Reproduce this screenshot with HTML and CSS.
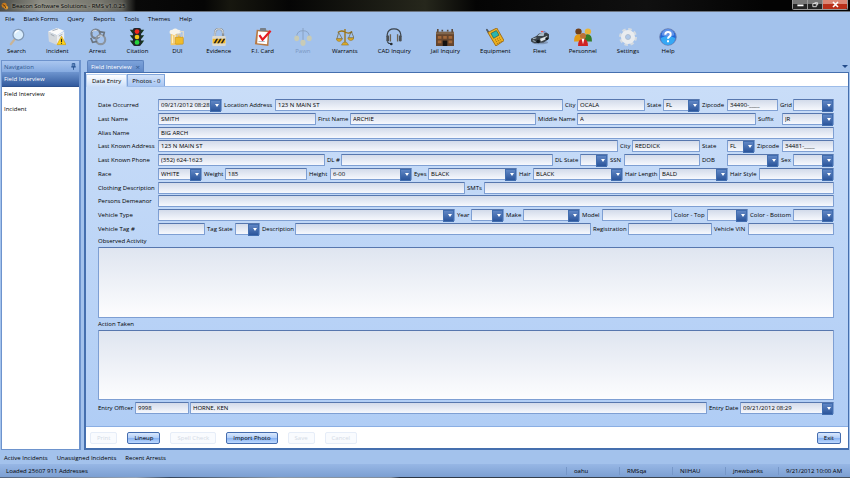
FILE: index.html
```html
<!DOCTYPE html>
<html lang="en">
<head>
<meta charset="utf-8">
<title>Beacon Software Solutions - RMS v1.0.25</title>
<link rel="stylesheet" href="styles.css">
</head>
<body>
<div class="app">
  <header class="titlebar">
    <svg class="app-icon" viewBox="0 0 10 10"><circle cx="4" cy="4" r="3.200" fill="#c77a1c"/><circle cx="6.500" cy="7" r="2.400" fill="#e09a30"/><path d="M2 3l3 2 1 3" stroke="#4a2808" fill="none"/></svg>
    <h1>Beacon Software Solutions - RMS v1.0.25</h1>
    <div class="window-buttons">
      <button aria-label="Minimize"><svg viewBox="0 0 16 9"><path d="M5 5.500h7" stroke="#fff" stroke-width="2"/></svg></button>
      <button aria-label="Restore"><svg viewBox="0 0 16 9"><path d="M7.500 2.500h3.500v3M5.500 3.500h4v3.500h-4z" stroke="#eee" fill="none"/></svg></button>
      <button class="close" aria-label="Close"><svg viewBox="0 0 24 9"><path d="M10 2l5 5M15 2l-5 5" stroke="#fff" stroke-width="1.600"/></svg></button>
    </div>
  </header>

  <nav class="menu">
    <button>File</button><button>Blank Forms</button><button>Query</button><button>Reports</button><button>Tools</button><button>Themes</button><button>Help</button>
  </nav>

  <div class="toolbar">
    <button><svg viewBox="0 0 20 20"><path d="M8 12l-5 6" stroke="#c8b498" stroke-width="2.400" stroke-linecap="round"/><circle cx="11.500" cy="7.500" r="6" fill="#d8ecfc" stroke="#8098b4" stroke-width="1.400"/><path d="M8 6q1-3 4-3" stroke="#fff" stroke-width="1.400" fill="none"/></svg>Search</button>
    <button><svg viewBox="0 0 20 20"><path d="M0 4l10-4 8 3-8 5z" fill="#fafafa"/><path d="M0 4l10 4v11l-9-4z" fill="#d4d8dc"/><path d="M10 8l8-4v10l-8 5z" fill="#eceef0"/><path d="M3 7l4 2M12 9l4-2M5 3l6-2" stroke="#9aa4b0"/><path d="M15 9l5 9.500h-10z" fill="#ffd318" stroke="#c99200" stroke-width=".6"/><path d="M15 12v3.500M15 16.400v1.200" stroke="#222" stroke-width="1.300"/></svg>Incident</button>
    <button><svg viewBox="0 0 20 20" fill="none"><circle cx="7.500" cy="6.500" r="4.800" stroke="#77818d" stroke-width="2.400"/><circle cx="13" cy="13" r="5" stroke="#8b949f" stroke-width="2.400"/><path d="M3.500 4q2-2 5-1.300M10 10q2-2 5-1" stroke="#e5e9ee"/><path d="M11 4l6 1-1 4M2 11l2 5 5-1" stroke="#69737e" stroke-width="1.800"/></svg>Arrest</button>
    <button><svg viewBox="0 0 20 20"><path d="M2 2h16l-3 4h-10zM2 8h16l-3 4h-10zM2 14h16l-3 4h-10z" fill="#17351e"/><rect x="5.500" y="0" width="9" height="20" rx="2" fill="#20262a"/><circle cx="10" cy="4" r="2.600" fill="#f3261c"/><circle cx="10" cy="10" r="2.600" fill="#f2c814"/><circle cx="10" cy="16" r="2.600" fill="#25d33c"/></svg>Citation</button>
    <button><svg viewBox="0 0 20 20"><path d="M3 6h10v13h-10z" fill="#f2c76a"/><path d="M5 8v9M8 8v9" stroke="#fff0c0" stroke-width="1.600"/><path d="M2 6q-1-4 3-4 3-3 6 0 4 0 3 4l-2 1-2-1-3 2z" fill="#f7f4ea"/><path d="M13 4h4v7h-4" fill="none" stroke="#ded9cb" stroke-width="1.600"/><rect x="8" y="10" width="9" height="8" rx="1" fill="#f0bc2c" stroke="#b98318" stroke-width=".6"/><path d="M10 10v-2q2.500-3 5 0v2" fill="none" stroke="#c4c8ca" stroke-width="1.400"/></svg>DUI</button>
    <button><svg viewBox="0 0 20 20"><path d="M5.500 12v-6q0-5 4.500-5t4.500 5v6" fill="none" stroke="#8b9298" stroke-width="2.400"/><path d="M5.500 11v-5q0-5 4.500-5t4.500 5" fill="none" stroke="#eceff1"/><rect x="2.500" y="9" width="15" height="11" rx="1" fill="#dcdad0"/><path d="M3 12h14v5h-14z" fill="#f2b723"/><path d="M4 17l3-5h2l-3 5zM8 17l3-5h2l-3 5zM12 17l3-5h2l-3 5z" fill="#292622"/></svg>Evidence</button>
    <button><svg viewBox="0 0 20 20"><path d="M3 2l14 1-1 17-15-2z" fill="#b87840"/><path d="M4.500 3.500l11 1-1 13.500-11-1z" fill="#fff"/><path d="M7 0h6l1 3.500h-8z" fill="#777f88"/><path d="M6 8l3.500 5 9-10" stroke="#e51c23" stroke-width="2.400" fill="none"/><path d="M5 15h7" stroke="#aab3bf"/></svg>F.I. Card</button>
    <button disabled><svg viewBox="0 0 20 20"><path d="M10 0v14M3 10q0-7 7-7t7 7" fill="none" stroke="#7b91ad"/><ellipse cx="3" cy="11.500" rx="2.700" ry="3.200" fill="#d8cfa0"/><ellipse cx="17" cy="11.500" rx="2.700" ry="3.200" fill="#d8cfa0"/><ellipse cx="10" cy="16.500" rx="2.900" ry="3.500" fill="#d8cfa0"/></svg>Pawn</button>
    <button><svg viewBox="0 0 20 20"><path d="M10 1v15M2 5q4-3 8-.5 4 2.500 8-.5" fill="none" stroke="#9d7415" stroke-width="1.500"/><path d="M3 5l-2 7h6zM17 4l-3 7h6z" fill="none" stroke="#6f653c" stroke-width=".8"/><path d="M0 12h7q-1 3-3.500 3t-3.500-3zM13 11h7q-1 3-3.500 3t-3.500-3zM6 19l2-3h4l2 3z" fill="#d9a928" stroke="#8a6817" stroke-width=".5"/></svg>Warrants</button>
    <button><svg viewBox="0 0 20 20" fill="none"><path d="M2.500 10v-3q1-6 7.500-6t7.500 6v3" stroke="#3a424a" stroke-width="1.300"/><rect x="1.500" y="8" width="3" height="7" rx="1.500" fill="#4b5055"/><rect x="15.500" y="8" width="3" height="7" rx="1.500" fill="#4b5055"/><path d="M6 7v8M14 7v8" stroke="#6b6254" stroke-width="1.500"/><path d="M2.500 15q1 2.500 4 2.500" stroke="#333b42" stroke-width="1.200"/><circle cx="7" cy="17.800" r="1.500" fill="#252b30"/></svg>CAD Inquiry</button>
    <button><svg viewBox="0 0 20 20"><path d="M0 5h20v15h-20z" fill="#65452d"/><path d="M0 4h20v3h-20z" fill="#80664e"/><path d="M2 1v4M18 1v4M7 2v2M13 2v2" stroke="#59483b" stroke-width="1.800"/><path d="M2 9h4v3h-4zM8 9h4v3h-4zM14 9h4v3h-4zM2 14h4v3h-4zM14 14h4v3h-4z" fill="#a3683a"/><path d="M7.500 14h5v6h-5z" fill="#151211"/></svg>Jail Inquiry</button>
    <button><svg viewBox="0 0 20 20"><path d="M3 5l-2-3" stroke="#4f5963" stroke-width="2" stroke-linecap="round"/><path d="M2 5l10-5 8 14-9 6z" fill="#efb31f" stroke="#996815" stroke-linejoin="round"/><path d="M5.500 6l6-3.100 3 5-6 3.500z" fill="#29b6ae" stroke="#24524c" stroke-width=".7"/><path d="M10 13.500l6-3M11 15.500l6-3M12 17.500l6-3" stroke="#8d5a16" stroke-dasharray="1.200"/></svg>Equipment</button>
    <button><svg viewBox="0 0 20 20"><ellipse cx="10" cy="16" rx="9" ry="2" fill="#8097b8"/><path d="M0 12l6-3 3-3 8-1 3 2v5l-6 4-10 1-4-2z" fill="#3a4249"/><path d="M7 9l3-3 5-1-1 4z" fill="#a9bbc9"/><path d="M10 12l8-3v3l-7 3z" fill="#dfe5e9"/><path d="M11 4h3" stroke="#e5564c" stroke-width="1.500"/><path d="M14 4h2" stroke="#6a84d6" stroke-width="1.500"/><circle cx="8" cy="15" r="2" fill="#11171c"/><circle cx="17.500" cy="12" r="1.600" fill="#11171c"/><path d="M2 12l4-1M2 14l3 1" stroke="#b9c8d2"/></svg>Fleet</button>
    <button><svg viewBox="0 0 20 20"><circle cx="5" cy="4" r="3.500" fill="#6f401b"/><path d="M0 15q0-8 5-8t5 8z" fill="#e49b16"/><circle cx="15.500" cy="4" r="3.500" fill="#e8b53a"/><path d="M10 15q0-8 5-8t5 8z" fill="#347c28"/><circle cx="10" cy="9" r="3.400" fill="#bd7134"/><path d="M4.500 20q0-8 5.500-8t5.500 8z" fill="#cf2323"/><path d="M8.500 12h3l-1.500 6z" fill="#fff"/></svg>Personnel</button>
    <button><svg viewBox="0 0 20 20"><circle cx="10" cy="10" r="8" fill="none" stroke="#d3dae1" stroke-width="4" stroke-dasharray="3.600 2.683"/><circle cx="10" cy="10" r="5.300" fill="none" stroke="#e9ecef" stroke-width="5"/><circle cx="10" cy="10" r="2.800" fill="#b0c9e9" stroke="#aeb9c5" stroke-width=".7"/></svg>Settings</button>
    <button><svg viewBox="0 0 20 20"><circle cx="10" cy="10" r="9.200" fill="#2166d8" stroke="#7182b0"/><path d="M2 11a8 8 0 0 0 16 0q-8-4-16 0z" fill="#35a8f4"/><path d="M3 8a7 7 0 0 1 14 0q-7 3-14 0z" fill="#6394e8"/><path d="M7 7.500q0-3 3-3t3 2.600q0 1.500-1.500 2.500t-1.500 2.400M10 13.500v2.300" stroke="#fff" stroke-width="2.200" fill="none"/></svg>Help</button>
  </div>

  <div class="workspace">
    <aside class="navigation">
      <h2>Navigation <svg viewBox="0 0 6 8"><path d="M1.500 .5h3v4h-3zM0 4.500h6M3 4.500v3.500" stroke="#24508f" fill="none"/><path d="M3.500 .5v4" stroke="#24508f"/></svg></h2>
      <a class="current" href="#interview-1">Field Interview</a>
      <a href="#interview-2">Field Interview</a>
      <a href="#incident">Incident</a>
    </aside>

    <main class="document">
      <div class="document-tabs">
        <div class="document-tab">Field Interview <button aria-label="Close tab">×</button></div>
        <button class="tab-list" aria-label="Open documents"></button>
      </div>
      <div class="frame">
        <div class="page-tabs" role="tablist">
          <button class="active" role="tab" aria-selected="true">Data Entry</button>
          <button role="tab" aria-selected="false">Photos - 0</button>
        </div>

        <form class="form">
          <div class="rows">
            <div class="row r-date">
              <label for="occurred">Date Occurred</label><span class="combo"><input id="occurred" value="09/21/2012 08:28"><button type="button" aria-label="Pick date"></button></span>
              <label for="location">Location Address</label><input id="location" value="123 N MAIN ST">
              <label for="city">City</label><input id="city" value="OCALA">
              <label for="state">State</label><span class="combo"><select id="state"><option>FL</option></select></span>
              <label for="zip">Zipcode</label><input id="zip" value="34490-____">
              <label for="grid">Grid</label><span class="combo"><select id="grid"><option></option></select></span>
            </div>
            <div class="row r-name">
              <label for="last">Last Name</label><input id="last" value="SMITH">
              <label for="first">First Name</label><input id="first" value="ARCHIE">
              <label for="middle">Middle Name</label><input id="middle" value="A">
              <label for="suffix">Suffix</label><span class="combo"><select id="suffix"><option>JR</option></select></span>
            </div>
            <div class="row r-full">
              <label for="alias">Alias Name</label><input id="alias" value="BIG ARCH">
            </div>
            <div class="row r-address">
              <label for="address">Last Known Address</label><input id="address" value="123 N MAIN ST">
              <label for="city2">City</label><input id="city2" value="REDDICK">
              <label for="state2">State</label><span class="combo"><select id="state2"><option>FL</option></select></span>
              <label for="zip2">Zipcode</label><input id="zip2" value="34481-____">
            </div>
            <div class="row r-phone">
              <label for="phone">Last Known Phone</label><input id="phone" value="(352) 624-1623">
              <label for="dl">DL #</label><input id="dl">
              <label for="dlstate">DL State</label><span class="combo"><select id="dlstate"><option></option></select></span>
              <label for="ssn">SSN</label><input id="ssn">
              <label for="dob">DOB</label><span class="combo"><input id="dob"><button type="button" aria-label="Pick date of birth"></button></span>
              <label for="sex">Sex</label><span class="combo"><select id="sex"><option></option></select></span>
            </div>
            <div class="row r-looks">
              <label for="race">Race</label><span class="combo"><select id="race"><option>WHITE</option></select></span>
              <label for="weight">Weight</label><input id="weight" value="185">
              <label for="height">Height</label><span class="combo"><select id="height"><option>6-00</option></select></span>
              <label for="eyes">Eyes</label><span class="combo"><select id="eyes"><option>BLACK</option></select></span>
              <label for="hair">Hair</label><span class="combo"><select id="hair"><option>BLACK</option></select></span>
              <label for="hairlen">Hair Length</label><span class="combo"><select id="hairlen"><option>BALD</option></select></span>
              <label for="hairstyle">Hair Style</label><span class="combo"><select id="hairstyle"><option></option></select></span>
            </div>
            <div class="row r-clothing">
              <label for="clothing">Clothing Description</label><input id="clothing">
              <label for="smts">SMTs</label><input id="smts">
            </div>
            <div class="row r-full">
              <label for="demeanor">Persons Demeanor</label><input id="demeanor">
            </div>
            <div class="row r-vehicle">
              <label for="vtype">Vehicle Type</label><span class="combo"><select id="vtype"><option></option></select></span>
              <label for="year">Year</label><span class="combo"><select id="year"><option></option></select></span>
              <label for="make">Make</label><span class="combo"><select id="make"><option></option></select></span>
              <label for="model">Model</label><input id="model">
              <label for="ctop">Color - Top</label><span class="combo"><select id="ctop"><option></option></select></span>
              <label for="cbottom">Color - Bottom</label><span class="combo"><select id="cbottom"><option></option></select></span>
            </div>
            <div class="row r-tag">
              <label for="tag">Vehicle Tag #</label><input id="tag">
              <label for="tagstate">Tag State</label><span class="combo"><select id="tagstate"><option></option></select></span>
              <label for="desc">Description</label><input id="desc">
              <label for="reg">Registration</label><input id="reg">
              <label for="vin">Vehicle VIN</label><input id="vin">
            </div>
          </div>
          <label class="area-label" for="observed">Observed Activity</label>
          <textarea id="observed"></textarea>
          <label class="area-label" for="action">Action Taken</label>
          <textarea id="action"></textarea>
          <div class="row r-officer">
            <label for="officer">Entry Officer</label><input id="officer" value="9998">
            <input aria-label="Officer name" value="HORNE, KEN">
            <label for="entrydate">Entry Date</label><span class="combo"><input id="entrydate" value="09/21/2012 08:29"><button type="button" aria-label="Pick entry date"></button></span>
          </div>
        </form>

        <div class="actions">
          <button disabled>Print</button>
          <button>Lineup</button>
          <button disabled>Spell Check</button>
          <button>Import Photo</button>
          <button disabled>Save</button>
          <button disabled>Cancel</button>
          <button class="exit">Exit</button>
        </div>
      </div>
    </main>
  </div>

  <nav class="panels"><a href="#active">Active Incidents</a><a href="#unassigned">Unassigned Incidents</a><a href="#recent">Recent Arrests</a></nav>
  <footer class="status">
    <span class="message">Loaded 25607 911 Addresses</span>
    <span>oahu</span><span>RMSqa</span><span>NIIHAU</span><span>jnewbanks</span><span class="clock">9/21/2012 10:00 AM</span>
  </footer>
  <div class="desktop-edge"></div>
</div>
</body>
</html>
```
FILE: styles.css
```css
* { box-sizing: border-box; }

body, h1, h2 { margin: 0; }

body, button, input, select, textarea {
  font: 6px/8px "Open Sans", "Noto Sans", sans-serif;
  color: #000;
}

button {
  padding: 0;
  border: 0;
  background: none;
}

a { color: inherit; text-decoration: none; }

.app {
  display: flex;
  flex-direction: column;
  height: 100vh;
  background: #a3c2ec;
  overflow: hidden;
}

/* Title bar */
.titlebar {
  display: flex;
  align-items: center;
  gap: 3px;
  height: 12px;
  padding-left: 1px;
  background: linear-gradient(90deg, #4c4d48 0, #8b8b82 40px, #77776e 100px, #5c5c55 122px, #090909 136px, #050505 24%, #17170f 27%, #050505 34%, #26271c 50%, #040404 56%, #101010 76%, #030303 90%);
  border-bottom: 1px solid #6c7480;
}

.app-icon { width: 8px; height: 8px; }

h1 {
  flex: 1;
  font-size: 6px;
  font-weight: 400;
  color: #000;
  text-shadow: 0 0 3px #c9c8bc;
}

.window-buttons {
  display: flex;
  align-self: flex-start;
  margin-right: 2px;
  border: 1px solid #999;
  border-top: 0;
  border-radius: 0 0 2px 2px;
  overflow: hidden;
}

.window-buttons button {
  width: 15px;
  height: 9px;
  background: linear-gradient(#777 50%, #252525 50%);
  border-right: 1px solid #999;
}

.window-buttons svg { display: block; width: 100%; height: 9px; }

.window-buttons .close {
  width: 24px;
  background: linear-gradient(#dc8775 50%, #b9301a 50%);
  border: 0;
}

/* Menu and toolbar */
.menu {
  display: flex;
  gap: 9px;
  padding: 3px 0 3px 5px;
}

.toolbar {
  display: flex;
  height: 34px;
  margin-left: -3px;
}

.toolbar button {
  display: flex;
  flex-direction: column;
  align-items: center;
  gap: 1px;
  min-width: 36px;
  padding: 2px 10px 0;
  white-space: nowrap;
}

.toolbar svg { width: 18px; height: 18px; }

.toolbar button:disabled { color: #7a97c2; }
.toolbar button:disabled svg { opacity: 0.7; }

/* Workspace */
.workspace {
  display: flex;
  flex: 1;
  gap: 3px;
  min-height: 0;
  padding: 0 1px;
}

.navigation {
  flex: none;
  width: 80px;
  border: 1px solid #6d93cd;
  border-right-width: 2px;
  background: #fff;
}

h2 {
  display: flex;
  align-items: center;
  justify-content: space-between;
  height: 11px;
  padding: 0 3px 0 2px;
  font-size: 6px;
  font-weight: 400;
  color: #2e568e;
  background: linear-gradient(#a9c6f0, #86abe0);
}

h2 svg { width: 5px; height: 7px; }

.navigation a {
  display: block;
  padding: 3px 2px 4px;
}

.navigation .current {
  color: #fff;
  background: linear-gradient(#6e95cf, #325a9d);
  border-bottom: 1px solid #2c508d;
  padding-bottom: 3px;
}

.document {
  display: flex;
  flex: 1;
  flex-direction: column;
  min-width: 0;
}

.document-tabs {
  display: flex;
  justify-content: space-between;
  height: 12px;
  padding-left: 3px;
}

.document-tab {
  display: flex;
  align-items: center;
  gap: 4px;
  padding: 0 3px;
  color: #fff;
  background: linear-gradient(#7ca2da, #6089c8);
  border: 1px solid #5d83bf;
  border-bottom: 0;
  border-radius: 2px 2px 0 0;
}

.document-tab button {
  font-size: 8px;
  color: #335990;
}

.tab-list {
  align-self: center;
  margin-right: 1px;
  border: 3px solid transparent;
  border-top-color: #234b8a;
  border-bottom: 0;
}

.frame {
  display: flex;
  flex: 1;
  flex-direction: column;
  min-height: 0;
  border: 1px solid #456fae;
  border-width: 1px 1px 2px 2px;
  background: #fff;
}

.page-tabs {
  display: flex;
  align-items: flex-end;
  height: 14px;
  border-bottom: 1px solid #9dbce9;
}

.page-tabs button {
  height: 12px;
  padding: 0 4px;
  background: linear-gradient(#d4e3f9, #a8c6f2);
  border: 1px solid #7fa4da;
  border-bottom: 0;
}

.page-tabs .active {
  height: 13px;
  margin-bottom: -1px;
  padding: 0 5px;
  border-color: #b7cff0;
  background: linear-gradient(#fff, #c9ddf8);
}

/* Form */
.form {
  display: flex;
  flex: 1;
  flex-direction: column;
  min-height: 0;
  padding: 12px 14px 12px 12px;
  background: linear-gradient(#c9ddf8, #b0cdf5);
}

.rows {
  display: flex;
  flex-direction: column;
  justify-content: space-between;
  height: 136px;
}

.row {
  display: grid;
  align-items: center;
  height: 12px;
}

.row label { padding-left: 2px; white-space: nowrap; }
.row label:first-child { padding-left: 0; }

.r-date { grid-template-columns: 60px 64fr 53px 288fr 14px 68fr 18px 37fr 27px 51fr 15px 41fr; }
.r-name { grid-template-columns: 60px 158fr 34px 186fr 41px 179fr 26px 52fr; }
.r-full { grid-template-columns: 60px 1fr; }
.r-address { grid-template-columns: 60px 460fr 14px 68fr 27px 28fr 27px 52fr; }
.r-phone { grid-template-columns: 60px 167fr 16px 212fr 27px 28fr 16px 76fr 27px 52fr 14px 41fr; }
.r-looks { grid-template-columns: 60px 44fr 23px 82fr 23px 82fr 16px 89fr 16px 90fr 36px 69fr 31px 75fr; }
.r-clothing { grid-template-columns: 60px 307fr 19px 350fr; }
.r-vehicle { grid-template-columns: 60px 297fr 16px 33fr 19px 57fr 22px 70fr 35px 41fr 45px 41fr; }
.r-tag { grid-template-columns: 60px 47fr 30px 25fr 35px 296fr 37px 84fr 36px 86fr; }
.r-officer { grid-template-columns: 37px 54fr 1px 517fr 33px 94fr; }
.r-officer > input + input { grid-column: 4; }

.row input, .row select, textarea {
  width: 100%;
  min-width: 0;
  height: 12px;
  margin: 0;
  padding: 0 2px;
  border: 1px solid #7e9fd3;
  border-top-color: #5777ae;
  border-radius: 1px;
  background: linear-gradient(#d3dbea, #f6f8fd);
  appearance: none;
  outline: 0;
}

.combo {
  position: relative;
  display: flex;
  min-width: 0;
}

.combo::after {
  content: "";
  position: absolute;
  top: 1px;
  right: 1px;
  width: 9px;
  height: 10px;
  background: linear-gradient(#6086c4, #2b559b);
  border: 1px solid #416daf;
  pointer-events: none;
}

.combo::before {
  content: "";
  position: absolute;
  z-index: 1;
  top: 5px;
  right: 3px;
  border: 3px solid transparent;
  border-width: 3px 2px 0;
  border-top-color: #fff;
  pointer-events: none;
}

.combo button {
  position: absolute;
  inset: 1px 1px 1px auto;
  width: 9px;
}

.area-label { padding: 2px 0; }

textarea {
  flex: 1;
  display: block;
  min-height: 0;
  resize: none;
  background: linear-gradient(#dfe5f0, #fdfdfe);
}

.r-officer { margin-top: 2px; }

/* Action buttons */
.actions {
  display: flex;
  align-items: center;
  gap: 10px;
  height: 22px;
  padding: 0 7px 0 4px;
  border-top: 1px solid #8aaee3;
}

.actions button {
  height: 12px;
  padding: 0 6px;
  border: 1px solid #456daf;
  border-radius: 2px;
  background: linear-gradient(#d9e8fd 0, #b4d0f9 45%, #86b0f0 50%, #bdd9ff);
}

.actions button:disabled {
  color: #d3dae5;
  background: #f9fbfe;
  border-color: #e6edf8;
}

.actions .exit { margin-left: auto; }

/* Bottom bars */
.panels {
  display: flex;
  gap: 9px;
  padding: 4px 4px 2px;
}

.status {
  display: flex;
  align-items: center;
  height: 13px;
  padding-left: 6px;
  background: linear-gradient(#97b7e5, #7c9fd2);
}

.status .message { flex: 1; padding: 0; border: 0; }

.status span {
  width: 53px;
  padding-left: 7px;
  border-left: 1px solid #7697c8;
  white-space: nowrap;
}

.status .clock { width: 72px; }

.desktop-edge {
  height: 1px;
  background: linear-gradient(90deg, #53657e, #94a3b6 16%, #35465c 20%, #8b99a8 33%, #7f8c9c 46%, #2b3644 47%, #46515d);
}
```
